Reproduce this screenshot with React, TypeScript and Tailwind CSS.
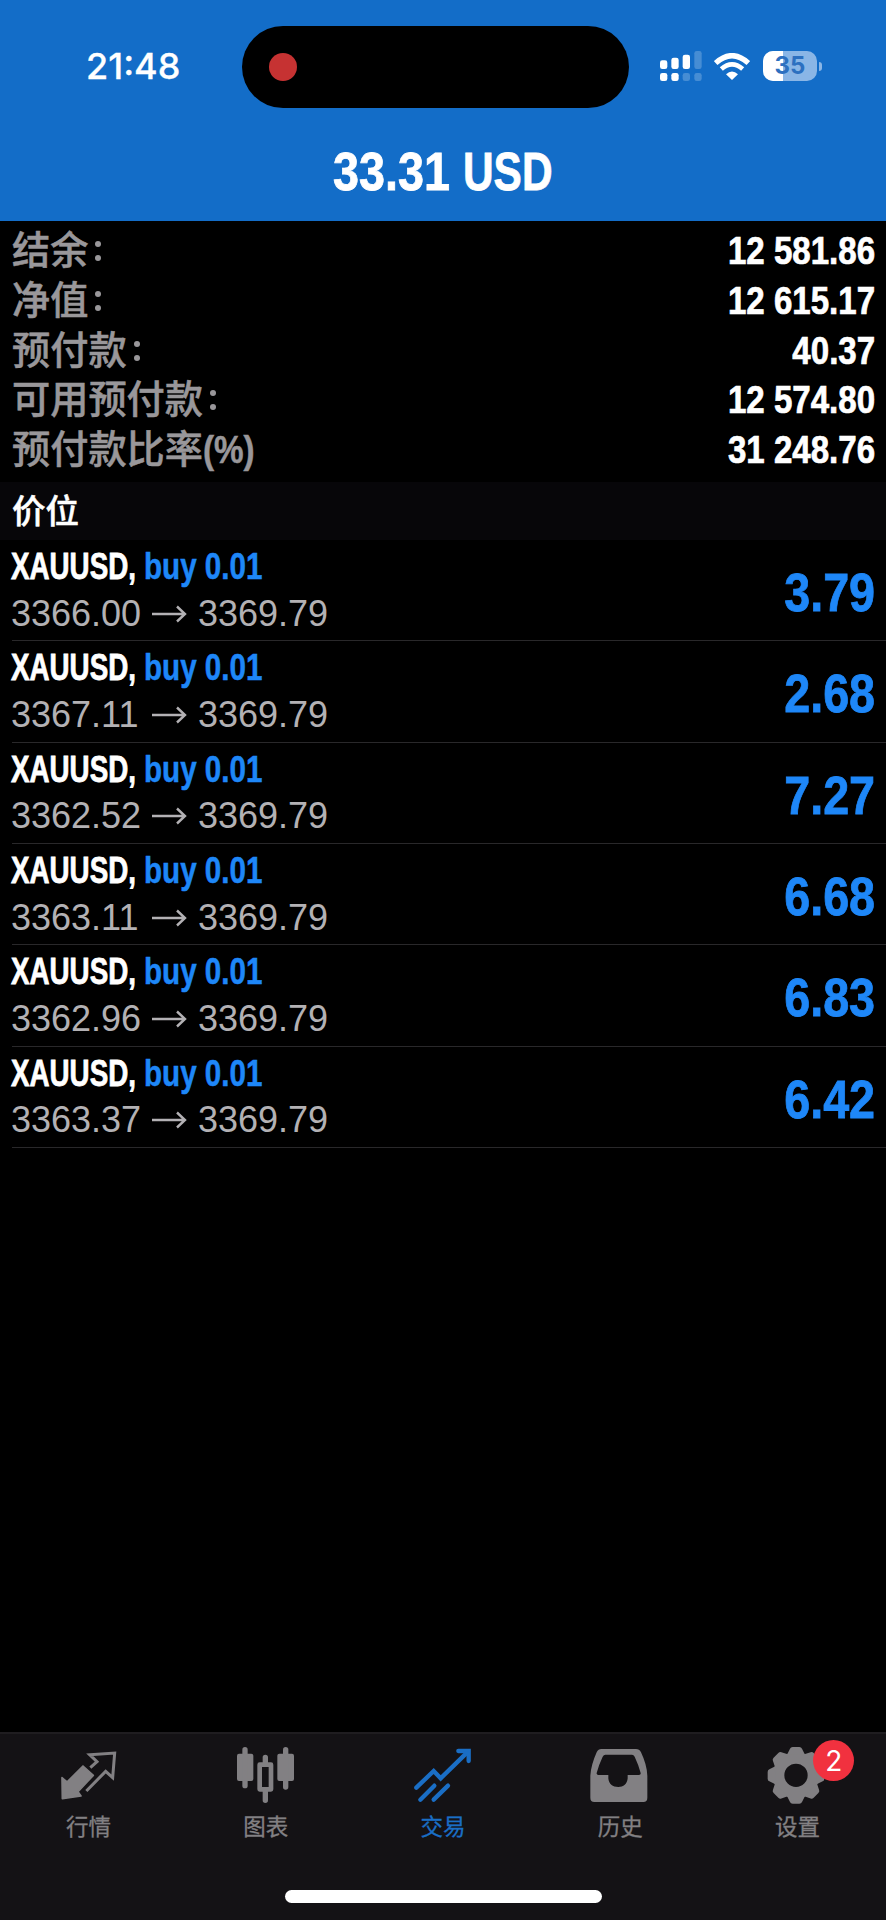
import type { ReactNode } from 'react'

type Position = { open: string; current: string; profit: string }

const summary = [
  { label: '结余', colon: true, value: '12 581.86' },
  { label: '净值', colon: true, value: '12 615.17' },
  { label: '预付款', colon: true, value: '40.37' },
  { label: '可用预付款', colon: true, value: '12 574.80' },
  { label: '预付款比率', colon: false, value: '31 248.76' },
]

const positions: Position[] = [
  { open: '3366.00', current: '3369.79', profit: '3.79' },
  { open: '3367.11', current: '3369.79', profit: '2.68' },
  { open: '3362.52', current: '3369.79', profit: '7.27' },
  { open: '3363.11', current: '3369.79', profit: '6.68' },
  { open: '3362.96', current: '3369.79', profit: '6.83' },
  { open: '3363.37', current: '3369.79', profit: '6.42' },
]

function SignalIcon() {
  return (
    <svg width="42" height="30" viewBox="0 0 126 90" fill="#fff">
      <rect x="0" y="28" width="22" height="26" rx="7" />
      <rect x="34" y="20" width="22" height="34" rx="7" />
      <rect x="68" y="11" width="22" height="43" rx="7" />
      <rect x="103" y="0" width="22" height="54" rx="7" opacity=".22" />
      <rect x="0" y="66" width="22" height="24" rx="7" />
      <rect x="34" y="66" width="22" height="24" rx="7" />
      <rect x="68" y="66" width="22" height="24" rx="7" opacity=".22" />
      <rect x="103" y="66" width="22" height="24" rx="7" opacity=".22" />
    </svg>
  )
}

function WifiIcon() {
  return (
    <svg width="36" height="27" viewBox="0 0 108 81" fill="none" stroke="#fff">
      <path d="M5 30 Q54 -14 103 30" strokeWidth="16" />
      <path d="M22 48 Q54 20 86 48" strokeWidth="14" />
      <path d="M54 81 L36 64 Q54 47 72 64 Z" fill="#fff" stroke="none" />
    </svg>
  )
}

function Battery() {
  return (
    <div className="flex items-center gap-[2px]">
      <div className="relative flex h-[30px] w-[54px] items-center justify-center overflow-hidden rounded-[10px] bg-[#8ab6e6]">
        <div className="absolute inset-y-0 left-0 w-5 bg-white" />
        <span className="relative text-[24px] leading-none font-bold text-[#2c70c0]">35</span>
      </div>
      <div className="h-[9px] w-[3px] rounded-r-full bg-[#8ab6e6]" />
    </div>
  )
}

function QuotesIcon() {
  return (
    <svg width="60" height="60" viewBox="0 0 180 180" fill="currentColor">
      <path
        d="M9 98 L24 111 L72 63 L103 91 L57 140 L66 153 L10 161 Z"
        stroke="currentColor"
        strokeWidth="5"
        strokeLinejoin="round"
      />
      <path
        d="M94 68 L114 50 L92 29 L167 24 L161 98 L140 79 L82 138"
        fill="none"
        stroke="currentColor"
        strokeWidth="9"
      />
    </svg>
  )
}

function ChartIcon() {
  return (
    <svg width="60" height="60" viewBox="0 0 180 180" fill="currentColor">
      <rect x="3" y="26" width="49" height="82" rx="6" />
      <rect x="19" y="6" width="16" height="124" rx="8" />
      <rect x="71" y="59" width="34" height="74" fill="none" stroke="currentColor" strokeWidth="14" strokeLinejoin="round" />
      <path d="M80 56 V37 a8 8 0 0 1 16 0 V56 Z M80 138 V166 a8 8 0 0 0 16 0 V138 Z" />
      <rect x="124" y="26" width="50" height="82" rx="6" />
      <rect x="141" y="6" width="16" height="128" rx="8" />
    </svg>
  )
}

function TradeIcon() {
  return (
    <svg
      width="60"
      height="60"
      viewBox="0 0 180 180"
      fill="none"
      stroke="currentColor"
      strokeWidth="13"
      strokeLinecap="round"
    >
      <path d="M10 128 L62 78 L83 100 L162 23" strokeLinejoin="miter" />
      <path d="M136 18 H167 V48" strokeLinejoin="miter" />
      <path d="M150 20 H168 V38 Z" fill="currentColor" stroke="none" />
      <path d="M22 164 L64 122 M62 164 L105 122" />
    </svg>
  )
}

function HistoryIcon() {
  return (
    <svg width="60" height="60" viewBox="0 0 180 180" fill="currentColor">
      <path
        fillRule="evenodd"
        d="M34 12 H138 Q148 12 153 22 Q171 60 172 92 V158 Q172 171 160 171 H13 Q1 171 1 158 V92 Q3 60 20 22 Q25 12 34 12 Z
           M46 29 Q41 29 38 35 Q27 58 20 84 Q19 90 25 90 H55 V98 C55 116 68 126 85 126 C100 126 113 116 113 98 V90 H147 Q153 90 152 84 Q145 58 134 35 Q131 29 126 29 Z"
      />
    </svg>
  )
}

const teeth = [0, 45, 90, 135, 180, 225, 270, 315]

function SettingsIcon() {
  return (
    <svg width="60" height="60" viewBox="0 0 180 180" fill="currentColor">
      <g transform="translate(87 91)">
        <circle r="52" fill="none" stroke="currentColor" strokeWidth="34" />
        {teeth.map((angle) => (
          <path
            key={angle}
            transform={`rotate(${angle})`}
            d="M-27 -62 L-18 -80 Q-16 -85 -10 -85 H10 Q16 -85 18 -80 L27 -62 Z"
          />
        ))}
      </g>
    </svg>
  )
}

function PositionRow({ position }: { position: Position }) {
  return (
    <div className="ml-3 flex h-[101.33px] items-center justify-between border-b-[1.5px] border-[#29282a] pt-[2px] pr-[11px]">
      <div className="-ml-px">
        <div className="flex h-[45px] items-center text-[37px] leading-none font-bold">
          <span className="w-[133px]">
            <span className="inline-block origin-left scale-x-[.75] [-webkit-text-stroke:0.8px_currentColor]">XAUUSD,</span>
          </span>
          <span className="inline-block origin-left scale-x-[.8] text-[#1e87f8] [-webkit-text-stroke:0.5px_currentColor]">
            buy 0.01
          </span>
        </div>
        <div className="flex h-[49px] items-center text-[36px] leading-none text-[#b3b1b4]">
          <span className="w-[141px]">{position.open}</span>
          <svg width="35" height="18" viewBox="0 0 35 18" fill="none" stroke="currentColor" strokeWidth="2.4">
            <path d="M0 9 H33 M25 1.5 L33 9 L25 16.5" />
          </svg>
          <span className="ml-[11px]">{position.current}</span>
        </div>
      </div>
      <span className="origin-right scale-x-[.865] pt-[2px] text-[54px] leading-none font-bold text-[#1e87f8] [-webkit-text-stroke:0.8px_currentColor]">
        {position.profit}
      </span>
    </div>
  )
}

function Tab({ label, active, badge, children }: { label: string; active?: boolean; badge?: number; children: ReactNode }) {
  return (
    <button className={`flex flex-1 flex-col items-center pt-[11px] ${active ? 'text-[#1a6ec5]' : 'text-[#828083]'}`}>
      <span className="relative">
        {children}
        {badge && (
          <span className="absolute top-[-5px] left-[46px] flex size-[41px] items-center justify-center rounded-full bg-[#f1313f] font-['Inter'] text-[28px] leading-none text-white">
            {badge}
          </span>
        )}
      </span>
      <span className="mt-[10px] text-[22.5px] leading-[26px] [-webkit-text-stroke:0.3px_currentColor]">{label}</span>
    </button>
  )
}

export default function App() {
  return (
    <div className="flex h-[1920px] w-[886px] flex-col overflow-hidden bg-black font-['Liberation_Sans','Noto_Sans_CJK_SC',sans-serif] text-white">
      <header className="h-[220.5px] shrink-0 bg-[#136dc8] pt-[26px]">
        <div className="flex h-[82px] items-center font-['Inter',sans-serif]">
          <div className="w-[242px] pb-[2px] pl-[86px] text-[36px] leading-none font-medium [-webkit-text-stroke:0.3px_currentColor]">
            21:48
          </div>
          <div className="flex h-full w-[387px] items-center rounded-full bg-black pl-[27px]">
            <div className="size-[28px] rounded-full bg-[#c63232]" />
          </div>
          <div className="flex items-center pb-[2px] pl-[31px]">
            <SignalIcon />
            <div className="mr-[13px] ml-[12px]">
              <WifiIcon />
            </div>
            <Battery />
          </div>
        </div>
        <h1 className="mt-[36px] flex pl-[333px] text-[54px] leading-[54px] font-bold [-webkit-text-stroke:0.8px_currentColor]">
          <span className="w-[130px]">
            <span className="inline-block origin-left scale-x-[.865]">33.31</span>
          </span>
          <span className="inline-block origin-left scale-x-[.785]">USD</span>
        </h1>
      </header>

      <section className="h-[261.5px] shrink-0 pt-[6px] pr-[11px] pl-3">
        {summary.map((item) => (
          <div key={item.label} className="flex h-[49.67px] items-center justify-between text-[38.2px] leading-none">
            <span className="flex items-center font-medium text-[#99979a] [-webkit-text-stroke:0.5px_currentColor]">
              {item.label}
              {item.colon ? (
                <span className="ml-[4px] flex flex-col gap-[8px] pl-[3px]">
                  <span className="size-[6px] rounded-full bg-current" />
                  <span className="size-[6px] rounded-full bg-current" />
                </span>
              ) : (
                <span className="origin-left scale-x-[.87] font-bold">(%)</span>
              )}
            </span>
            <span className="origin-right scale-x-[.87] text-[38px] font-bold [-webkit-text-stroke:0.7px_currentColor]">
              {item.value}
            </span>
          </div>
        ))}
      </section>

      <h2 className="flex h-[58px] shrink-0 items-center bg-[#070609] px-3 pt-[2px] text-[33.5px] leading-none font-medium [-webkit-text-stroke:0.5px_currentColor]">
        价位
      </h2>

      <main className="flex-1">
        {positions.map((position) => (
          <PositionRow key={position.open} position={position} />
        ))}
      </main>

      <nav className="flex h-[188px] shrink-0 flex-col justify-between border-t-2 border-[#1f1d20] bg-[#141215] pb-[17px]">
        <div className="flex">
          <Tab label="行情">
            <QuotesIcon />
          </Tab>
          <Tab label="图表">
            <ChartIcon />
          </Tab>
          <Tab label="交易" active>
            <TradeIcon />
          </Tab>
          <Tab label="历史">
            <HistoryIcon />
          </Tab>
          <Tab label="设置" badge={2}>
            <SettingsIcon />
          </Tab>
        </div>
        <div className="mx-auto h-[13px] w-[317px] rounded-full bg-white" />
      </nav>
    </div>
  )
}
